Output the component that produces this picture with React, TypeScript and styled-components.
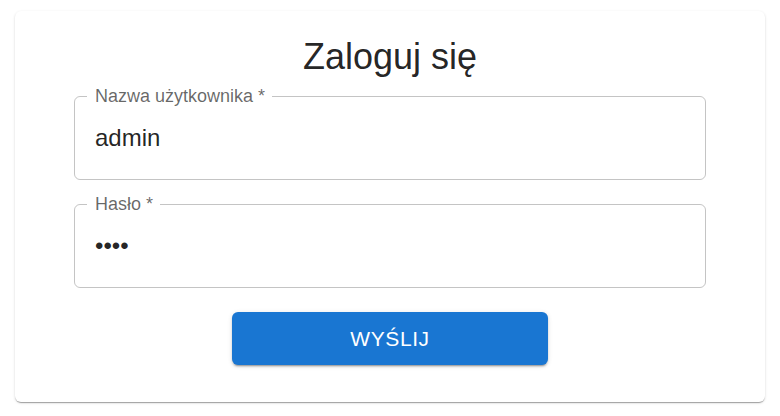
import React from "react";
import styled, { createGlobalStyle } from "styled-components";

const Global = createGlobalStyle`
  html, body { margin: 0; padding: 0; background: #fff; }
  body { font-family: "Liberation Sans", Arial, sans-serif; }
  * { box-sizing: border-box; }
`;

const Page = styled.div`
  padding: 11px 15px;
`;

const Card = styled.form`
  background: #fff;
  border-radius: 6px;
  box-shadow: 0px 2px 1px -1px rgba(0,0,0,0.2), 0px 1px 1px 0px rgba(0,0,0,0.14), 0px 1px 3px 0px rgba(0,0,0,0.12);
  padding: 26px 59px 37px;
  display: flex;
  flex-direction: column;
  align-items: stretch;
`;

const Title = styled.h1`
  margin: 0 0 19px;
  font-size: 36px;
  line-height: 40px;
  font-weight: 400;
  text-align: center;
  color: rgba(0,0,0,0.87);
`;

const FieldRoot = styled.div<{ $gap: number }>`
  position: relative;
  margin-bottom: ${(p) => p.$gap}px;
`;

const Input = styled.input`
  display: block;
  width: 100%;
  height: 84px;
  border: 0;
  background: transparent;
  outline: none;
  padding: 24.75px 21px;
  font-family: inherit;
  font-size: 24px;
  line-height: 34.5px;
  color: rgba(0,0,0,0.87);
`;

const Outline = styled.fieldset`
  position: absolute;
  inset: -7.5px 0 0 0;
  margin: 0;
  padding: 0 12px;
  border: 1px solid rgba(0,0,0,0.23);
  border-radius: 6px;
  pointer-events: none;
  text-align: left;
  min-width: 0;
`;

const Legend = styled.legend`
  visibility: hidden;
  font-size: 18px;
  height: 16.5px;
  line-height: 16.5px;
  padding: 0;
  float: unset;
  white-space: nowrap;
  & > span { padding: 0 7.5px; display: inline-block; }
`;

const Label = styled.label`
  position: absolute;
  left: 21px;
  top: -13px;
  font-size: 18px;
  line-height: 26px;
  color: rgba(0,0,0,0.6);
  white-space: nowrap;
  pointer-events: none;
`;

const ButtonRow = styled.div`
  display: flex;
  justify-content: center;
`;

const SubmitButton = styled.button`
  width: 316px;
  height: 53px;
  border: 0;
  border-radius: 6px;
  background: #1976d2;
  color: #fff;
  font-family: inherit;
  font-size: 21px;
  font-weight: 500;
  letter-spacing: 0.6px;
  text-transform: uppercase;
  box-shadow: 0px 3px 1px -2px rgba(0,0,0,0.2), 0px 2px 2px 0px rgba(0,0,0,0.14), 0px 1px 5px 0px rgba(0,0,0,0.12);
  cursor: pointer;
`;

function Field({ label, type, value, gap }: { label: string; type: string; value: string; gap: number }) {
  return (
    <FieldRoot $gap={gap}>
      <Label>{label}</Label>
      <Input type={type} value={value} readOnly />
      <Outline aria-hidden>
        <Legend>
          <span>{label}</span>
        </Legend>
      </Outline>
    </FieldRoot>
  );
}

export default function App() {
  return (
    <Page>
      <Global />
      <Card onSubmit={(e) => e.preventDefault()}>
        <Title>Zaloguj się</Title>
        <Field label="Nazwa użytkownika *" type="text" value="admin" gap={24} />
        <Field label="Hasło *" type="password" value="abcd" gap={24} />
        <ButtonRow>
          <SubmitButton type="submit">Wyślij</SubmitButton>
        </ButtonRow>
      </Card>
    </Page>
  );
}
